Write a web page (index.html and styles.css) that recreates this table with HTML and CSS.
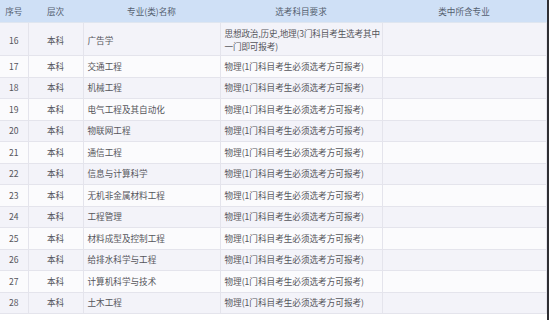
FILE: index.html
```html
<!DOCTYPE html>
<html lang="zh">
<head>
<meta charset="utf-8">
<link rel="stylesheet" href="styles.css">
</head>
<body>
<div class="page">
  <table class="grid">
    <colgroup>
      <col class="c1"><col class="c2"><col class="c3"><col class="c4"><col class="c5">
    </colgroup>
    <thead>
      <tr class="head">
        <th>序号</th><th>层次</th><th>专业(类)名称</th><th>选考科目要求</th><th>类中所含专业</th>
      </tr>
    </thead>
    <tbody>
      <tr class="tall odd"><td class="ctr">16</td><td class="ctr">本科</td><td>广告学</td><td class="wrap">思想政治,历史,地理(3门科目考生选考其中一门即可报考)</td><td></td></tr>
      <tr class="even"><td class="ctr">17</td><td class="ctr">本科</td><td>交通工程</td><td>物理(1门科目考生必须选考方可报考)</td><td></td></tr>
      <tr class="odd"><td class="ctr">18</td><td class="ctr">本科</td><td>机械工程</td><td>物理(1门科目考生必须选考方可报考)</td><td></td></tr>
      <tr class="even"><td class="ctr">19</td><td class="ctr">本科</td><td>电气工程及其自动化</td><td>物理(1门科目考生必须选考方可报考)</td><td></td></tr>
      <tr class="odd"><td class="ctr">20</td><td class="ctr">本科</td><td>物联网工程</td><td>物理(1门科目考生必须选考方可报考)</td><td></td></tr>
      <tr class="even"><td class="ctr">21</td><td class="ctr">本科</td><td>通信工程</td><td>物理(1门科目考生必须选考方可报考)</td><td></td></tr>
      <tr class="odd"><td class="ctr">22</td><td class="ctr">本科</td><td>信息与计算科学</td><td>物理(1门科目考生必须选考方可报考)</td><td></td></tr>
      <tr class="even"><td class="ctr">23</td><td class="ctr">本科</td><td>无机非金属材料工程</td><td>物理(1门科目考生必须选考方可报考)</td><td></td></tr>
      <tr class="odd"><td class="ctr">24</td><td class="ctr">本科</td><td>工程管理</td><td>物理(1门科目考生必须选考方可报考)</td><td></td></tr>
      <tr class="even"><td class="ctr">25</td><td class="ctr">本科</td><td>材料成型及控制工程</td><td>物理(1门科目考生必须选考方可报考)</td><td></td></tr>
      <tr class="odd"><td class="ctr">26</td><td class="ctr">本科</td><td>给排水科学与工程</td><td>物理(1门科目考生必须选考方可报考)</td><td></td></tr>
      <tr class="even"><td class="ctr">27</td><td class="ctr">本科</td><td>计算机科学与技术</td><td>物理(1门科目考生必须选考方可报考)</td><td></td></tr>
      <tr class="odd"><td class="ctr">28</td><td class="ctr">本科</td><td>土木工程</td><td>物理(1门科目考生必须选考方可报考)</td><td></td></tr>
    </tbody>
  </table>
  <div class="edge"></div>
</div>
</body>
</html>
```
FILE: styles.css
```css
html, body {
  margin: 0;
  padding: 0;
  background: #ffffff;
}
body {
  width: 550px;
  height: 320px;
  overflow: hidden;
  font-family: "Noto Sans CJK SC", "Noto Sans", sans-serif;
  color: #55555b;
}
.page {
  display: flex;
  align-items: flex-start;
  height: 320px;
}
.grid {
  border-collapse: collapse;
  table-layout: fixed;
  width: 546px;
  font-size: 8.6px;
  flex: none;
}
.c1 { width: 28px; }
.c2 { width: 55px; }
.c3 { width: 137px; }
.c4 { width: 162px; }
.c5 { width: 164px; }
.grid th, .grid td {
  border: 1px solid #e4e4ec;
  padding: 0 2px 0 4px;
  line-height: 13px;
  text-align: left;
  vertical-align: middle;
  overflow: hidden;
}
.grid td:first-child, .grid th:first-child { border-left: none; }
.head th {
  background: #cfe0f6;
  border-color: #cfe0f6;
  border-bottom-color: #dfe6f0;
  height: 21px;
  font-weight: normal;
  text-align: center;
  color: #556070;
  padding: 0;
}
.grid td.ctr { text-align: center; padding: 0; }
.grid td.wrap { letter-spacing: -0.15px; padding-right: 0; }
.grid tr.odd td { background: #f3f3f9; }
.grid tr.even td { background: #fbfbfd; }
.grid tbody tr { height: 21.5px; }
.grid tbody tr.tall { height: 33px; }
.grid tbody tr.tall td { padding-top: 2px; }
.edge {
  flex: none;
  width: 2px;
  height: 320px;
  background: #2e2e33;
}
```
